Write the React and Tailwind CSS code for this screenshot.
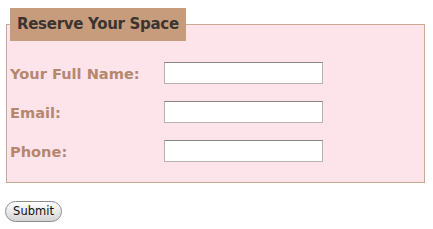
export default function App() {
  const rows = ["Your Full Name:", "Email:", "Phone:"];
  return (
    <div className="w-[433px] h-[229px] bg-white overflow-hidden" style={{ fontFamily: '"DejaVu Sans", Verdana, sans-serif' }}>
      <fieldset className="ml-[6px] mt-[8px] w-[419px] h-[175px] border border-[#c9aa93] bg-[#fde4ea] px-[3px] pt-0 pb-0">
        <legend className="h-[33px] px-[7px] bg-[#c69c7c] text-[#3b3431] font-bold text-[15px] tracking-[-0.3px] leading-[33px]">
          Reserve Your Space
        </legend>
        <div className="flex flex-col gap-[17px] pt-[21px]">
          {rows.map((r) => (
            <div key={r} className="flex items-center h-[22px]">
              <label className="w-[154px] text-[#b5876f] font-bold text-[14.6px] mt-[1px]">{r}</label>
              <input type="text" className="w-[159px] h-[22px] bg-white border border-[#b9b1b3] border-t-[#8a8486]" />
            </div>
          ))}
        </div>
      </fieldset>
      <div className="mt-[15px] ml-[5px]">
        <button className="w-[57px] h-[21px] rounded-full border border-[#8d8d8d] bg-gradient-to-b from-[#ffffff] to-[#d4d4d4] text-[11.5px] text-[#111] leading-none" style={{ fontFamily: '"DejaVu Sans", sans-serif' }}>
          Submit
        </button>
      </div>
    </div>
  );
}
